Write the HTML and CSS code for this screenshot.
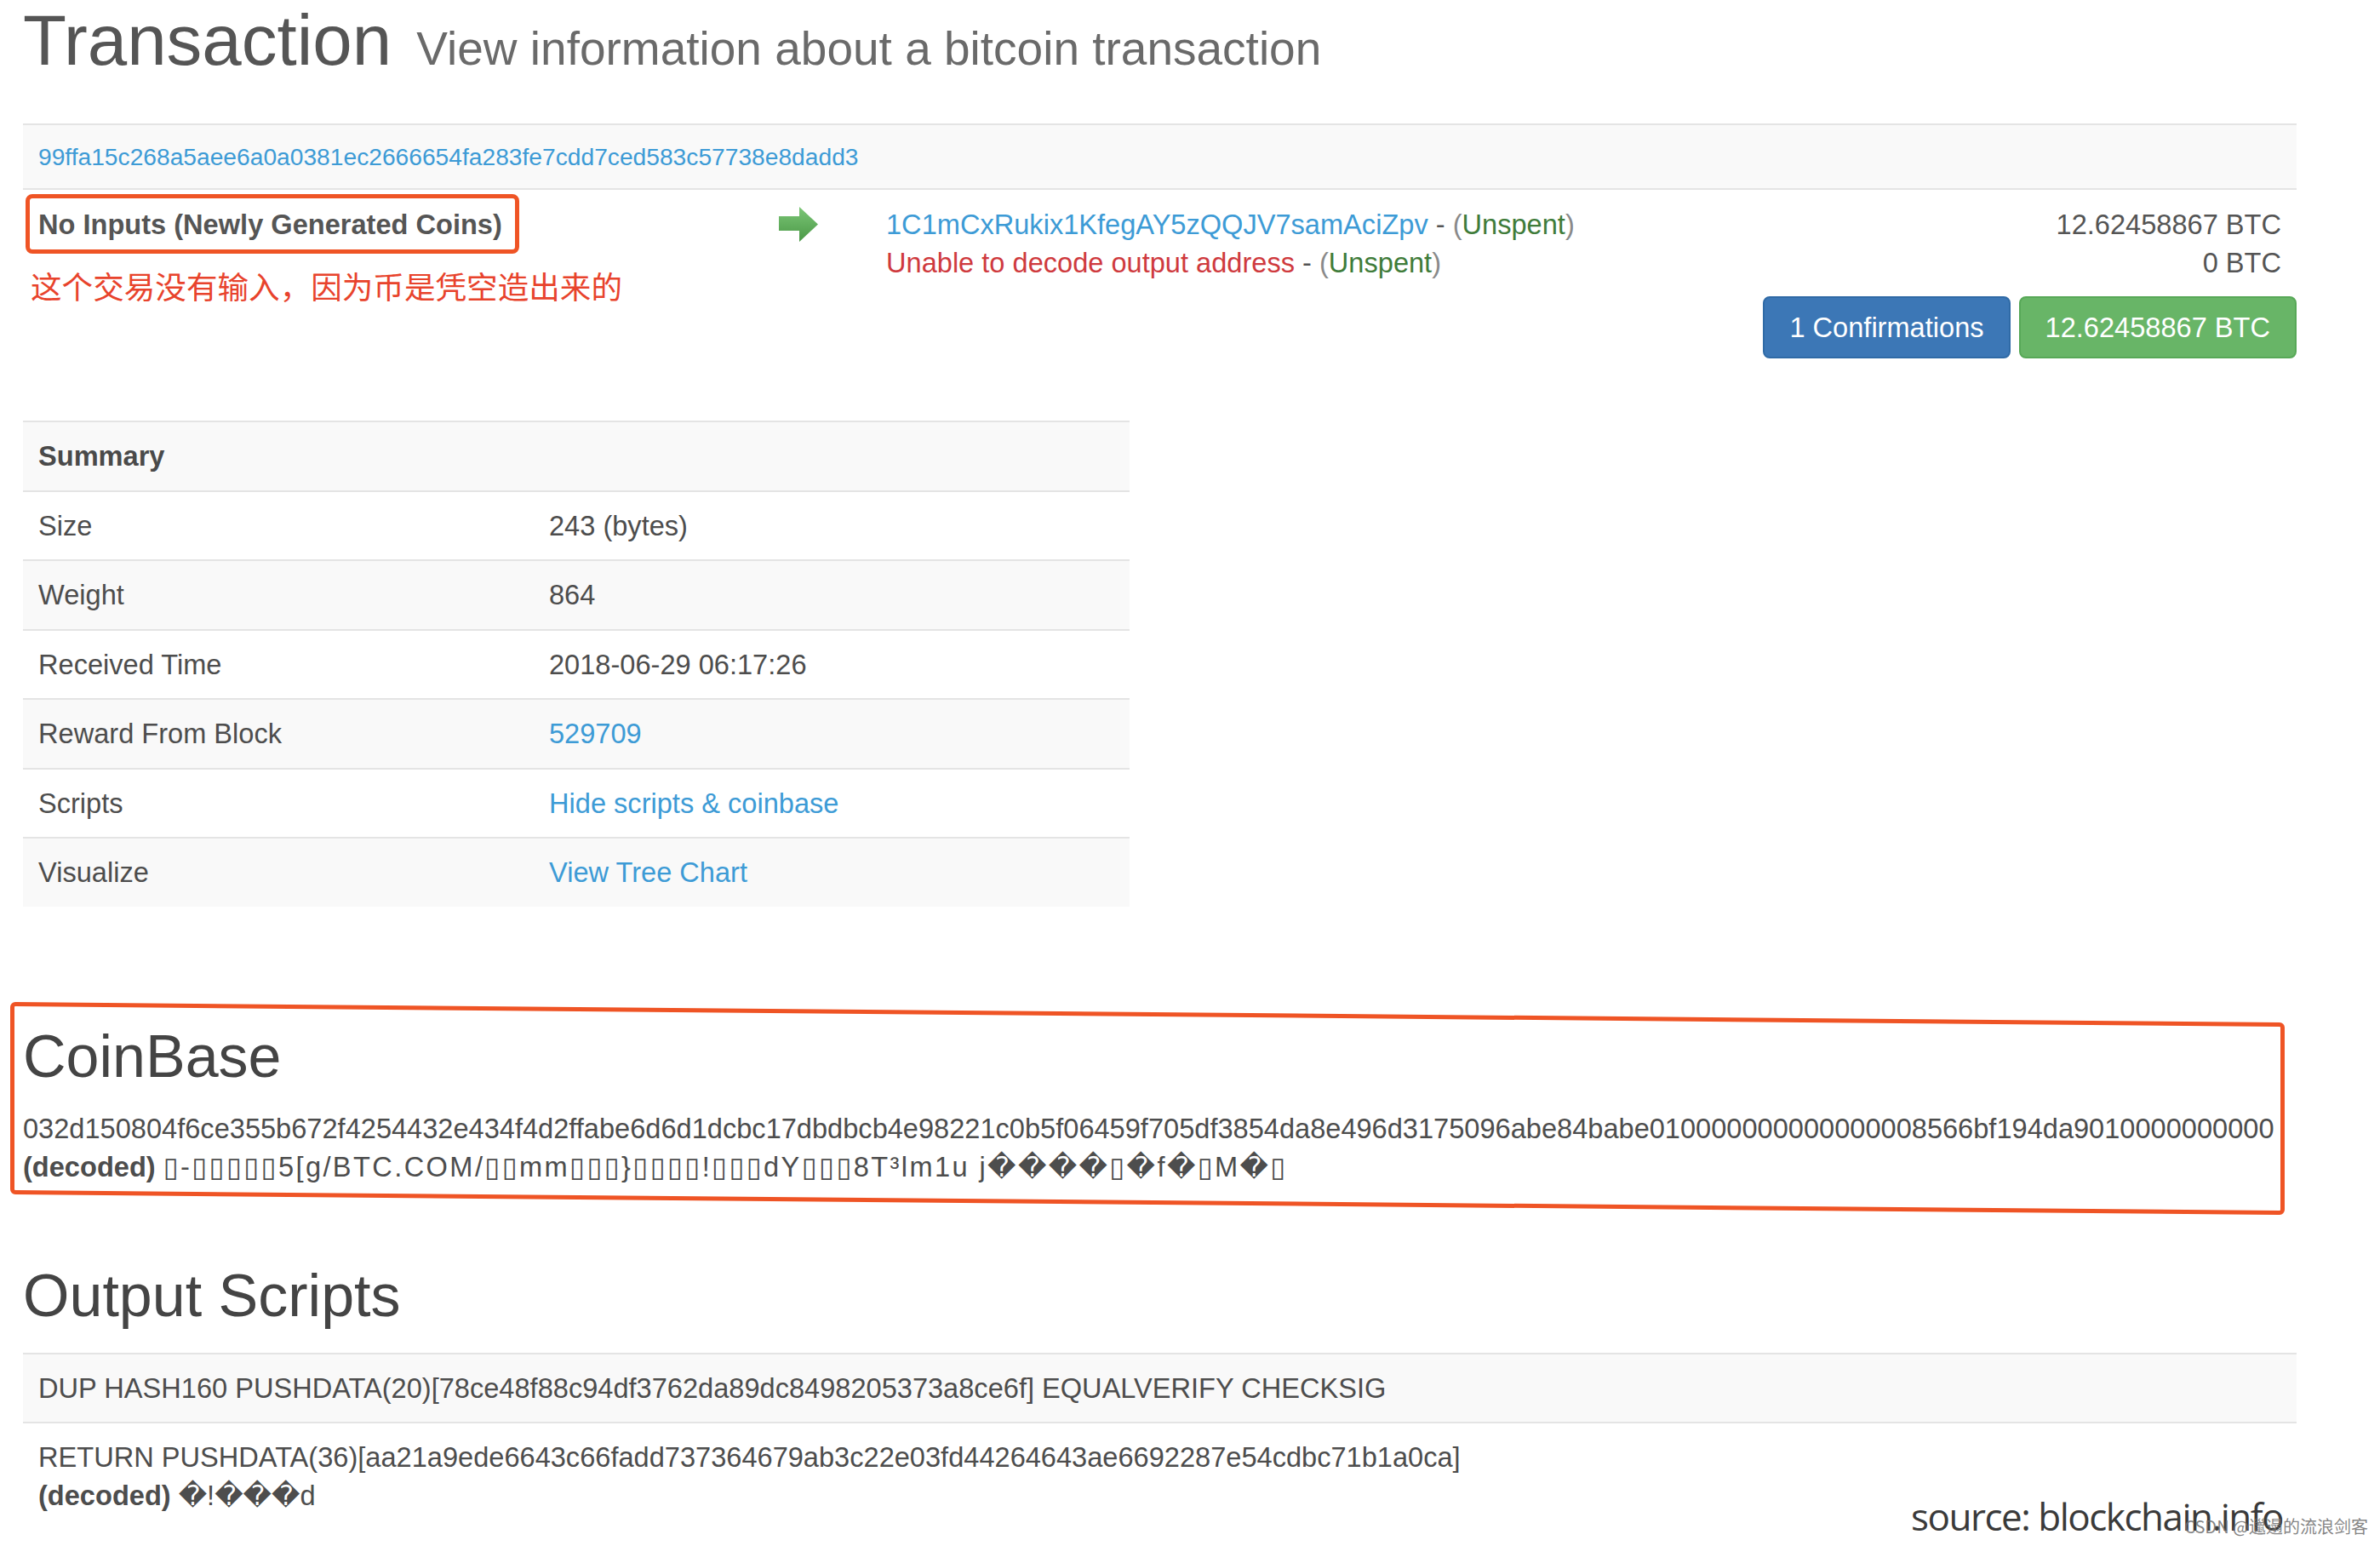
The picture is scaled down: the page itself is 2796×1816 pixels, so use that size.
FILE: index.html
```html
<!DOCTYPE html>
<html lang="en">
<head>
  <meta charset="UTF-8">
  <meta name="viewport" content="width=device-width, initial-scale=1.0">
  <title>Transaction</title>
  <link rel="stylesheet" href="styles.css">
</head>
<body>
  <div class="page">
    <h1 class="page-title">Transaction <small>View information about a bitcoin transaction</small></h1>

    <div class="tx">
      <div class="tx-hash">
        <a href="#">99ffa15c268a5aee6a0a0381ec2666654fa283fe7cdd7ced583c57738e8dadd3</a>
      </div>
      <div class="tx-body">
        <div class="tx-inputs">
          <span class="no-inputs">No Inputs (Newly Generated Coins)</span>
          <p class="note">这个交易没有输入，因为币是凭空造出来的</p>
        </div>
        <div class="tx-arrow">
          <svg width="46" height="41" viewBox="0 0 46 41">
            <defs>
              <linearGradient id="arrow-fill" x1="0" y1="0" x2="0" y2="1">
                <stop offset="0" stop-color="#7cc677"/>
                <stop offset="1" stop-color="#4a9846"/>
              </linearGradient>
            </defs>
            <path d="M0 11H24V0L46 20.5L24 41V28H0Z" fill="url(#arrow-fill)"/>
          </svg>
        </div>
        <div class="tx-outputs">
          <div class="out-line">
            <span><a href="#">1C1mCxRukix1KfegAY5zQQJV7samAciZpv</a> <span class="dash">-</span> <span class="paren">(</span><span class="unspent">Unspent</span><span class="paren">)</span></span>
            <span class="amount">12.62458867 BTC</span>
          </div>
          <div class="out-line">
            <span><span class="undecoded">Unable to decode output address</span> <span class="dash">-</span> <span class="paren">(</span><span class="unspent">Unspent</span><span class="paren">)</span></span>
            <span class="amount">0 BTC</span>
          </div>
        </div>
      </div>
      <div class="tx-footer">
        <button class="btn btn-primary">1 Confirmations</button>
        <button class="btn btn-success">12.62458867 BTC</button>
      </div>
    </div>

    <table class="summary">
      <tr><th colspan="2">Summary</th></tr>
      <tr><td>Size</td><td>243 (bytes)</td></tr>
      <tr><td>Weight</td><td>864</td></tr>
      <tr><td>Received Time</td><td>2018-06-29 06:17:26</td></tr>
      <tr><td>Reward From Block</td><td><a href="#">529709</a></td></tr>
      <tr><td>Scripts</td><td><a href="#">Hide scripts &amp; coinbase</a></td></tr>
      <tr><td>Visualize</td><td><a href="#">View Tree Chart</a></td></tr>
    </table>

    <div class="coinbase">
      <div class="mark"></div>
      <h2>CoinBase</h2>
      <div class="hex">032d150804f6ce355b672f4254432e434f4d2ffabe6d6d1dcbc17dbdbcb4e98221c0b5f06459f705df3854da8e496d3175096abe84babe010000000000000008566bf194da9010000000000</div>
      <div class="hex"><b>(decoded)</b> <span class="garbled wide">▯-▯▯▯▯▯5[g/BTC.COM/▯▯mm▯▯▯}▯▯▯▯!▯▯▯dY▯▯▯8T³lm1u j����▯�f�▯M�▯</span></div>
    </div>

    <div class="scripts">
      <h2>Output Scripts</h2>
      <div class="script-row">DUP HASH160 PUSHDATA(20)[78ce48f88c94df3762da89dc8498205373a8ce6f] EQUALVERIFY CHECKSIG</div>
      <div class="script-row">
        RETURN PUSHDATA(36)[aa21a9ede6643c66fadd737364679ab3c22e03fd44264643ae6692287e54cdbc71b1a0ca]<br>
        <b>(decoded)</b> <span class="garbled">�!���d</span>
      </div>
    </div>
  </div>

  <div class="source">source: blockchain.info</div>
  <div class="watermark">CSDN @邋遢的流浪剑客</div>
</body>
</html>
```

FILE: styles.css
```css
body {
  margin: 0;
  height: 1816px;
  overflow: hidden;
  position: relative;
  background-color: #fff;
  color: #4d4d4d;
  font-family: "Liberation Sans", Arial, sans-serif;
  font-size: 32.6px;
  line-height: 45px;
}

a {
  color: #3d9bd6;
  text-decoration: none;
}

.page {
  padding: 0 98px 0 27px;
}

.page-title {
  margin: 0;
  padding-top: 2px;
  font-size: 83.5px;
  font-weight: 400;
  line-height: 90px;
  color: #555;
}

.page-title small {
  margin-left: 6px;
  font-size: 55px;
  line-height: 1;
  color: #6a6a6a;
}

/* transaction box */
.tx {
  margin-top: 53px;
}

.tx-hash {
  border-top: 2px solid #e4e4e4;
  background-color: #f9f9f9;
  padding: 18px;
  font-size: 28.2px;
  line-height: 38px;
}

.tx-body {
  display: flex;
  border-top: 2px solid #e4e4e4;
  padding-top: 18px;
}

.tx-inputs {
  position: relative;
  width: 870px;
  box-sizing: border-box;
  padding: 0 18px;
}

.no-inputs {
  position: relative;
  display: inline-block;
  font-weight: bold;
  color: #555;
}

.no-inputs::after {
  content: '';
  position: absolute;
  top: -13px;
  right: -20px;
  bottom: -12px;
  left: -15px;
  border: 5px solid #ef5425;
  border-radius: 8px;
}

.note {
  position: absolute;
  top: 70px;
  left: 9px;
  margin: 0;
  white-space: nowrap;
  font-family: "Noto Sans CJK SC", sans-serif;
  font-size: 36.6px;
  line-height: 50px;
  color: #e8432c;
}

.tx-arrow {
  width: 126px;
  box-sizing: border-box;
  padding: 2px 0 0 18px;
}

.tx-arrow svg {
  display: block;
}

.tx-outputs {
  flex: 1;
  padding: 0 18px;
}

.out-line {
  display: flex;
  justify-content: space-between;
}

.dash {
  color: #555;
}

.paren {
  color: #8a8a8a;
}

.unspent {
  color: #3f7c3a;
}

.undecoded {
  color: #cf3a3e;
}

.amount {
  color: #555;
}

.tx-footer {
  display: flex;
  justify-content: flex-end;
  gap: 10px;
  margin-top: 17px;
}

.btn {
  padding: 12px 29px;
  border-radius: 8px;
  font-family: inherit;
  font-size: 32.6px;
  line-height: 45px;
  color: #fff;
  cursor: pointer;
}

.btn-primary {
  background-color: #3c77b6;
  border: 2px solid #2f6aa6;
}

.btn-success {
  background-color: #68b567;
  border: 2px solid #57a857;
}

/* summary table */
.summary {
  margin-top: 73px;
  width: 1300px;
  border-collapse: collapse;
}

.summary th,
.summary td {
  padding: 17px 18px 17.5px;
  border-top: 2px solid #e4e4e4;
  text-align: left;
}

.summary th {
  color: #4a4a4a;
}

.summary td:first-child {
  width: 564px;
}

.summary tr:nth-child(odd) {
  background-color: #f9f9f9;
}

/* coinbase */
.coinbase {
  position: relative;
  margin-top: 140px;
}

.coinbase .mark {
  position: absolute;
  top: -28px;
  left: -15px;
  width: 2672px;
  height: 226px;
  box-sizing: border-box;
  border: 5px solid #ef5425;
  border-radius: 6px;
  transform-origin: left top;
  transform: skewY(0.515deg);
}

.coinbase h2,
.scripts h2 {
  margin: 0 0 25px;
  font-size: 70px;
  font-weight: 400;
  line-height: 73px;
  color: #444;
}

.hex {
  white-space: nowrap;
}

.garbled {
  font-family: "Liberation Sans", "DejaVu Sans", sans-serif;
}

.garbled.wide {
  letter-spacing: 2.4px;
}

/* output scripts */
.scripts {
  margin-top: 93px;
}

.scripts h2 {
  margin-bottom: 30px;
}

.script-row {
  padding: 17px 18px;
  border-top: 2px solid #e4e4e4;
}

.script-row:first-of-type {
  background-color: #f9f9f9;
}

.source {
  position: absolute;
  top: 1759px;
  right: 114px;
  font-family: "Open Sans", sans-serif;
  font-size: 44px;
  line-height: 44px;
  letter-spacing: -1.5px;
  color: #3a3a3a;
}

.watermark {
  position: absolute;
  top: 1781px;
  right: 14px;
  font-family: "Noto Sans CJK SC", sans-serif;
  font-size: 20px;
  line-height: 24px;
  color: rgba(110, 110, 110, 0.85);
}
```
